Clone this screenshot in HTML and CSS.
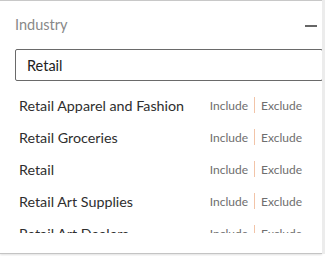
FILE: index.html
```html
<!DOCTYPE html>
<html lang="en">
<head>
  <meta charset="UTF-8" />
  <title>Industry filter</title>
  <link rel="stylesheet" href="styles.css">
</head>
<body>
  <div class="frame">
    <div class="panel">
      <!-- Header -->
      <div class="panel-head">
        <span class="panel-title">Industry</span>
        <span class="collapse"></span>
      </div>

      <input class="search" type="text" value="Retail" />

      <!-- Results -->
      <ul class="results">
        <li><span class="name">Retail Apparel and Fashion</span><span class="actions"><a href="#">Include</a><i></i><a href="#">Exclude</a></span></li>
        <li><span class="name">Retail Groceries</span><span class="actions"><a href="#">Include</a><i></i><a href="#">Exclude</a></span></li>
        <li><span class="name">Retail</span><span class="actions"><a href="#">Include</a><i></i><a href="#">Exclude</a></span></li>
        <li><span class="name">Retail Art Supplies</span><span class="actions"><a href="#">Include</a><i></i><a href="#">Exclude</a></span></li>
        <li><span class="name">Retail Art Dealers</span><span class="actions"><a href="#">Include</a><i></i><a href="#">Exclude</a></span></li>
        <li><span class="name">Retail Motor Vehicles</span><span class="actions"><a href="#">Include</a><i></i><a href="#">Exclude</a></span></li>
      </ul>
    </div>
    <div class="track"></div>
  </div>
</body>
</html>
```

FILE: styles.css
```css
body {
  margin: 0;
  font-family: 'Lato', 'Liberation Sans', sans-serif;
  background-color: #fff;
  color: #333;
}

.frame {
  display: flex;
  width: 326px;
  height: 256px;
}

.panel {
  width: 322px;
  height: 254px;
  box-sizing: border-box;
  border-top: 1px solid #c8c8c8;
  border-bottom: 1px solid #c4c4c4;
  box-shadow: 0 1px 2px rgba(0,0,0,0.12);
}

.track {
  width: 3px;
  height: 254px;
  background-color: #ececec;
}

.panel-head {
  display: flex;
  justify-content: space-between;
  align-items: center;
  height: 48px;
  padding: 0 5px 0 15px;
}

.panel-title {
  font-size: 14.5px;
  color: #888;
  margin-top: -1px;
}

.collapse {
  width: 12px;
  height: 2px;
  background-color: #666;
  margin-top: 1px;
}

.search {
  display: block;
  box-sizing: border-box;
  width: 308px;
  height: 32px;
  margin-left: 15px;
  padding: 0 11px;
  border: 1px solid #6a6a6a;
  border-radius: 2px;
  font-family: inherit;
  font-size: 14.5px;
  color: #222;
  outline: none;
}

.results {
  list-style: none;
  margin: 8px 0 0;
  padding: 0;
  height: 144px;
  overflow: hidden;
}

.results li {
  display: flex;
  justify-content: space-between;
  align-items: center;
  height: 32px;
  padding: 0 20px 0 19px;
}

.name {
  font-size: 14.3px;
  color: #2e2e2e;
}

.actions {
  display: flex;
  align-items: center;
  gap: 6px;
  font-size: 12px;
}

.actions a {
  color: #6e6e6e;
  text-decoration: none;
}

.actions i {
  width: 1px;
  height: 16px;
  background-color: #f2c4a8;
}
```
